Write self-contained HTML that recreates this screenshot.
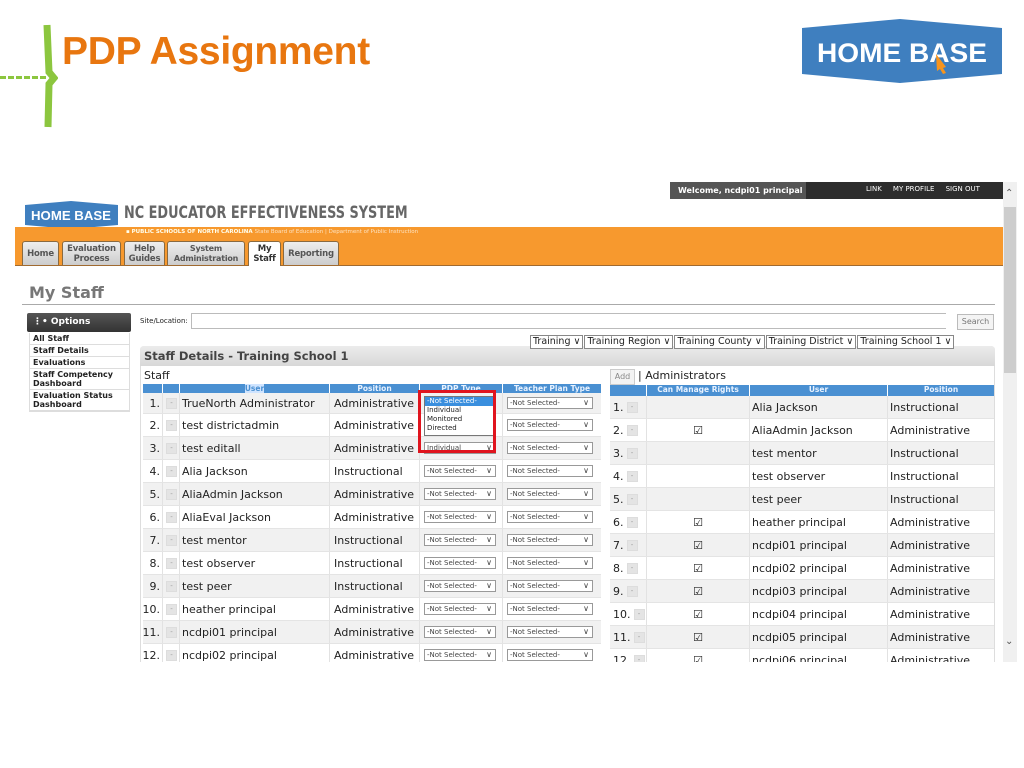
<!DOCTYPE html>
<html><head><meta charset="utf-8"><style>
*{box-sizing:border-box;margin:0;padding:0}
body{width:1024px;height:768px;background:#fff;position:relative;overflow:hidden;font-family:"DejaVu Sans","Liberation Sans",sans-serif;color:#222}
.a{position:absolute}
.t{font-family:"Liberation Sans",sans-serif;font-weight:bold;color:#e8760f;font-size:39px;left:62px;top:30px;letter-spacing:-0.3px}
.tab{position:absolute;top:241px;height:24px;background:linear-gradient(#eee,#ccc);border:1px solid #8a6a40;border-bottom:none;border-radius:3px 3px 0 0;font-size:8.5px;font-weight:bold;color:#555;text-align:center;line-height:10px;display:flex;align-items:center;justify-content:center;white-space:nowrap;letter-spacing:-0.2px}
.menu div{border-bottom:1px solid #ddd;font-size:8px;font-weight:bold;padding:1px 3px;line-height:9px}
.row{position:absolute;height:23px;font-size:11px;display:flex;align-items:center;border-bottom:1px solid #e4e4e4}
.row.o{background:#f1f1f1}
.c{flex:none;white-space:nowrap;overflow:hidden;border-right:1px solid #e2e2e2;height:100%;display:flex;align-items:center}
.btn{width:11px;height:11px;background:#e4e4e4;border:1px solid #ddd;font-size:7px;color:#999;display:inline-flex;align-items:center;justify-content:center;margin-left:3px}
.sel{font-size:7px;border:1px solid #999;background:#fff;height:12px;line-height:10px;padding-left:2px;position:relative;color:#444}
.sel:after{content:"\2228";position:absolute;right:3px;top:0;font-size:8px}
.hd{position:absolute;height:10px;background:#4a90d2;color:#e8f2ff;font-size:7.5px;font-weight:bold;display:flex}
.hd div{text-align:center;border-right:1px solid #fff;line-height:10px;flex:none}
.dd{font-size:9.5px;border:1px solid #888;height:14px;line-height:12px;padding:0 2px;display:inline-block;margin-right:1px;background:#fff}
</style></head><body>
<div class="a" style="left:0;top:76px;width:46px;border-top:3px dashed #8cc63f"></div>
<svg class="a" style="left:42px;top:22px" width="16" height="108"><path d="M5 3 L7 50 L12 56 L7 62 L6 105" stroke="#8cc63f" stroke-width="7" fill="none"/></svg>
<div class="a t">PDP Assignment</div>
<svg class="a" style="left:800px;top:18px" width="204" height="66"><polygon points="2,10 100,1 202,10 202,56 100,65 2,56" fill="#3f7fbf"/><text x="102" y="44" text-anchor="middle" font-family="Liberation Sans" font-weight="bold" font-size="27" fill="#fff" textLength="170" lengthAdjust="spacingAndGlyphs">HOME BASE</text><path d="M136 36 l10 13 l-3 1 l3 5 l-3 1 l-3-5 l-3 2z" fill="#f7941d"/></svg>

<div class="a" style="left:670px;top:182px;width:333px;height:17px;background:#2d2d2d"></div>
<div class="a" style="left:670px;top:182px;width:136px;height:17px;background:#555;color:#fff;font-size:8px;font-weight:bold;line-height:17px;padding-left:8px;white-space:nowrap">Welcome, ncdpi01 principal</div>
<div class="a" style="left:866px;top:182px;color:#fff;font-size:7px;line-height:15px;white-space:nowrap">LINK &nbsp;&nbsp;&nbsp; MY PROFILE &nbsp;&nbsp;&nbsp; SIGN OUT</div>
<div class="a" style="left:1003px;top:182px;width:14px;height:480px;background:#f0f0f0"></div>
<div class="a" style="left:1004px;top:207px;width:12px;height:166px;background:#cdcdcd"></div>
<div class="a" style="left:1005px;top:188px;font-size:10px;color:#555">&#8963;</div>
<div class="a" style="left:1005px;top:636px;font-size:10px;color:#555">&#8964;</div>

<svg class="a" style="left:24px;top:201px" width="95" height="28"><polygon points="1,4 47,0 94,4 94,24 47,28 1,24" fill="#3f7fbf"/><text x="47" y="19" text-anchor="middle" font-family="Liberation Sans" font-weight="bold" font-size="13" fill="#fff" textLength="80" lengthAdjust="spacingAndGlyphs">HOME BASE</text></svg>
<div class="a" style="left:124px;top:203px;font-family:'DejaVu Sans Condensed','DejaVu Sans',sans-serif;font-weight:bold;font-size:17px;color:#666;white-space:nowrap;transform:scaleX(0.84);transform-origin:left">NC EDUCATOR EFFECTIVENESS SYSTEM</div>
<div class="a" style="left:15px;top:227px;width:988px;height:39px;background:#f7992e;border-bottom:1px solid #a06a30"></div>
<div class="a" style="left:126px;top:229px;font-size:5.5px;color:#ffe;font-weight:bold;white-space:nowrap">▪ PUBLIC SCHOOLS OF NORTH CAROLINA <span style="font-weight:normal;color:#fde2c0">State Board of Education | Department of Public Instruction</span></div>
<div class="tab" style="left:22px;width:37px">Home</div>
<div class="tab" style="left:62px;width:59px">Evaluation<br>Process</div>
<div class="tab" style="left:124px;width:41px">Help<br>Guides</div>
<div class="tab" style="left:167px;width:78px;font-size:8px">System<br>Administration</div>
<div class="tab" style="left:248px;width:33px;background:#fff;color:#333;height:25px">My<br>Staff</div>
<div class="tab" style="left:283px;width:56px">Reporting</div>

<div class="a" style="left:29px;top:283px;font-size:16px;font-weight:bold;color:#777">My Staff</div>
<div class="a" style="left:22px;top:304px;width:973px;border-top:1px solid #aaa"></div>

<div class="a" style="left:27px;top:313px;width:104px;height:19px;background:linear-gradient(#555,#333);border-radius:2px;color:#fff;font-size:9px;font-weight:bold;line-height:19px;padding-left:6px">&#8942;&#8226; Options</div>
<div class="a menu" style="left:29px;top:333px;width:101px;border:1px solid #ddd;border-top:none">
<div>All Staff</div><div>Staff Details</div><div>Evaluations</div><div>Staff Competency<br>Dashboard</div><div>Evaluation Status<br>Dashboard</div></div>

<div class="a" style="left:140px;top:317px;font-size:7px">Site/Location:</div>
<div class="a" style="left:191px;top:313px;width:755px;height:16px;border:1px solid #bbb;border-right:none"></div>
<div class="a" style="left:957px;top:314px;width:37px;height:16px;border:1px solid #bbb;background:#f4f4f4;font-size:8px;color:#777;text-align:center;line-height:14px">Search</div>

<div class="a" style="left:140px;top:346px;width:855px;height:316px;border:1px solid #ddd;border-bottom:none;border-radius:4px 4px 0 0"></div>
<div class="a" style="left:140px;top:346px;width:855px;height:20px;background:linear-gradient(#ececec,#d8d8d8);border-radius:4px 4px 0 0;font-size:11.5px;font-weight:bold;color:#444;line-height:20px;padding-left:4px">Staff Details - Training School 1</div>
<div class="a" style="left:530px;top:329px;white-space:nowrap;height:15px"><span class="dd">Training ∨</span><span class="dd">Training Region ∨</span><span class="dd">Training County ∨</span><span class="dd">Training District ∨</span><span class="dd">Training School 1 ∨</span></div>
<div class="a" style="left:144px;top:369px;font-size:11px">Staff</div>

<div class="hd" style="left:143px;top:384px;width:458px"><div style="width:20px"></div><div style="width:17px"></div><div style="width:150px"><span style="background:#cfe4ff;color:#4a90d2">User</span></div><div style="width:90px">Position</div><div style="width:83px">PDP Type</div><div style="width:98px;border:none">Teacher Plan Type</div></div>

<div id="L"></div>
<div class="a" style="left:610px;top:369px;width:25px;height:16px;border:1px solid #ccc;background:#f3f3f3;font-size:8px;color:#888;text-align:center;line-height:14px">Add</div>
<div class="a" style="left:638px;top:369px;font-size:11px">| Administrators</div>
<div class="hd" style="left:610px;top:385px;width:384px;height:11px"><div style="width:37px"></div><div style="width:103px">Can Manage Rights</div><div style="width:138px">User</div><div style="width:106px;border:none">Position</div></div>
<div id="R"></div>

<div class="a" style="left:140px;top:662px;width:884px;height:106px;background:#fff"></div>
<div class="a" style="left:424px;top:396px;width:70px;height:40px;background:#fff;border:1px solid #777;font-size:7px;line-height:9px">
<div style="background:#3a8fde;color:#fff;padding-left:2px">-Not Selected-</div><div style="padding-left:2px">Individual</div><div style="padding-left:2px">Monitored</div><div style="padding-left:2px">Directed</div></div>
<div class="a" style="left:418px;top:390px;width:78px;height:63px;border:3px solid #e0141e"></div>

<script>
var L=[["TrueNorth Administrator","Administrative"],["test districtadmin","Administrative"],["test editall","Administrative","Individual"],["Alia Jackson","Instructional"],["AliaAdmin Jackson","Administrative"],["AliaEval Jackson","Administrative"],["test mentor","Instructional"],["test observer","Instructional"],["test peer","Instructional"],["heather principal","Administrative"],["ncdpi01 principal","Administrative"],["ncdpi02 principal","Administrative"]];
var h="";
for(var i=0;i<L.length;i++){var yy=(i==0)?393:(391+i*23);var ht=(i==0)?21:23;
h+='<div class="row'+(i%2==0?' o':'')+'" style="left:143px;top:'+yy+'px;width:458px;height:'+ht+'px"><div class="c" style="width:20px;justify-content:flex-end;padding-right:2px">'+(i+1)+'.</div><div class="c" style="width:17px"><span class="btn">-</span></div><div class="c" style="width:150px;padding-left:2px">'+L[i][0]+'</div><div class="c" style="width:90px;padding-left:4px">'+L[i][1]+'</div><div class="c" style="width:83px;padding-left:4px">'+(i<2?'':'<div class="sel" style="width:72px">'+(L[i][2]||'-Not Selected-')+'</div>')+'</div><div class="c" style="width:98px;padding-left:4px;border:none"><div class="sel" style="width:86px">-Not Selected-</div></div></div>';}
document.getElementById("L").innerHTML=h;
var R=[["Alia Jackson","Instructional",0],["AliaAdmin Jackson","Administrative",1],["test mentor","Instructional",0],["test observer","Instructional",0],["test peer","Instructional",0],["heather principal","Administrative",1],["ncdpi01 principal","Administrative",1],["ncdpi02 principal","Administrative",1],["ncdpi03 principal","Administrative",1],["ncdpi04 principal","Administrative",1],["ncdpi05 principal","Administrative",1],["ncdpi06 principal","Administrative",1]];
h="";
for(var i=0;i<R.length;i++){
h+='<div class="row'+(i%2==0?' o':'')+'" style="left:610px;top:'+(396+i*23)+'px;width:384px"><div class="c" style="width:37px;padding-left:3px">'+(i+1)+'.<span class="btn">-</span></div><div class="c" style="width:103px;justify-content:center">'+(R[i][2]?'&#9745;':'')+'</div><div class="c" style="width:138px;padding-left:2px">'+R[i][0]+'</div><div class="c" style="width:106px;padding-left:2px;border:none">'+R[i][1]+'</div></div>';}
document.getElementById("R").innerHTML=h;
</script>
</body></html>
